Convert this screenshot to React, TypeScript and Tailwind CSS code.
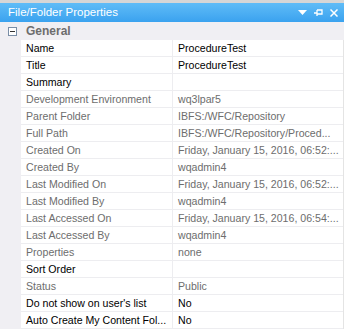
import React from "react";

type Prop = { name: string; value: string; readOnly?: boolean };

const props: Prop[] = [
  { name: "Name", value: "ProcedureTest" },
  { name: "Title", value: "ProcedureTest" },
  { name: "Summary", value: "" },
  { name: "Development Environment", value: "wq3lpar5", readOnly: true },
  { name: "Parent Folder", value: "IBFS:/WFC/Repository", readOnly: true },
  { name: "Full Path", value: "IBFS:/WFC/Repository/Proced...", readOnly: true },
  { name: "Created On", value: "Friday, January 15, 2016, 06:52:...", readOnly: true },
  { name: "Created By", value: "wqadmin4", readOnly: true },
  { name: "Last Modified On", value: "Friday, January 15, 2016, 06:52:...", readOnly: true },
  { name: "Last Modified By", value: "wqadmin4", readOnly: true },
  { name: "Last Accessed On", value: "Friday, January 15, 2016, 06:54:...", readOnly: true },
  { name: "Last Accessed By", value: "wqadmin4", readOnly: true },
  { name: "Properties", value: "none", readOnly: true },
  { name: "Sort Order", value: "" },
  { name: "Status", value: "Public", readOnly: true },
  { name: "Do not show on user's list", value: "No" },
  { name: "Auto Create My Content Fol...", value: "No" },
];

const App: React.FC = () => {
  return (
    <div
      className="w-[344px] h-[329px] overflow-hidden bg-white flex flex-col border-t-[3px] border-[#d6d6d6] text-[10.6px] leading-none"
      style={{ fontFamily: '"Liberation Sans", Arial, sans-serif' }}
    >
      {/* title bar */}
      <div className="h-[19px] shrink-0 flex items-center justify-between pl-[8px] pr-[6px] bg-gradient-to-b from-[#5fbcf7] to-[#3aa2ef] text-white text-[11.5px]">
        <span>File/Folder Properties</span>
        <div className="flex items-center gap-[7px]">
          <svg width="9" height="5" viewBox="0 0 9 5">
            <path d="M0 0h9L4.5 5z" fill="white" />
          </svg>
          <svg width="9" height="8" viewBox="0 0 9 8">
            <path d="M0 4h3M3 1v6M3 1h5v4H3" stroke="white" strokeWidth="1.3" fill="none" />
          </svg>
          <svg width="8" height="8" viewBox="0 0 8 8">
            <path d="M0.5 0.5l7 7M7.5 0.5l-7 7" stroke="white" strokeWidth="1.5" />
          </svg>
        </div>
      </div>

      {/* category */}
      <div className="h-[18px] shrink-0 flex items-center bg-[#f0eff3]">
        <div className="w-[21px] flex justify-center pl-[3px]">
          <div className="w-[9px] h-[9px] border border-[#7a8ea6] bg-white flex items-center justify-center">
            <div className="w-[5px] h-px bg-[#333]" />
          </div>
        </div>
        <span className="pl-[5px] font-bold text-[#6d6d6d] text-[12px]">General</span>
      </div>

      <div className="flex flex-1">
        <div className="w-[21px] shrink-0 bg-[#f0eff3]" />
        <div className="flex-1 flex flex-col border-r border-[#e4e4e4]">
          {props.map((p) => (
            <div
              key={p.name}
              className={`h-[17px] shrink-0 flex border-b border-[#ededf0] ${p.readOnly ? "text-[#6d6d6d]" : "text-black"}`}
            >
              <div className="w-[152px] shrink-0 pl-[5px] flex items-center border-r border-[#ededf0] whitespace-nowrap overflow-hidden">
                {p.name}
              </div>
              <div className="flex-1 pl-[5px] flex items-center whitespace-nowrap overflow-hidden">
                {p.value}
              </div>
            </div>
          ))}
        </div>
      </div>
    </div>
  );
};

export default App;
